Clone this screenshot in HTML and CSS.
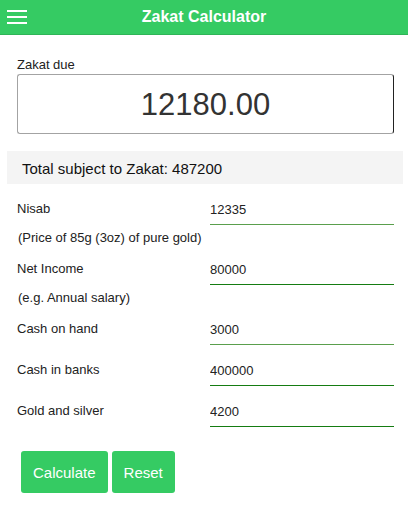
FILE: index.html
```
<!DOCTYPE html>
<html lang="en">
<head>
<meta charset="utf-8">
<title>Zakat Calculator</title>
<link rel="stylesheet" href="styles.css">
</head>
<body>
<header class="topbar">
  <div class="menu" aria-label="Menu">
    <svg width="20" height="14" viewBox="0 0 20 14"><rect x="0" y="0" width="20" height="2" fill="#fff"/><rect x="0" y="6" width="20" height="2" fill="#fff"/><rect x="0" y="12" width="20" height="2" fill="#fff"/></svg>
  </div>
  <h1 class="title">Zakat Calculator</h1>
  <div></div>
</header>
<main class="content">
  <section class="due">
    <div class="due-label">Zakat due</div>
    <div class="due-box">12180.00</div>
  </section>
  <div class="total">Total subject to Zakat: 487200</div>
  <form class="fields">
    <div class="row"><label class="label">Nisab</label><input class="field light" value="12335"></div>
    <div class="hint">(Price of 85g (3oz) of pure gold)</div>
    <div class="row"><label class="label">Net Income</label><input class="field dark" value="80000"></div>
    <div class="hint">(e.g. Annual salary)</div>
    <div class="row"><label class="label">Cash on hand</label><input class="field light" value="3000"></div>
    <div class="row"><label class="label">Cash in banks</label><input class="field dark" value="400000"></div>
    <div class="row"><label class="label">Gold and silver</label><input class="field dark" value="4200"></div>
  </form>
  <div class="actions">
    <button class="btn" type="button">Calculate</button>
    <button class="btn" type="button">Reset</button>
  </div>
</main>
</body>
</html>
```
FILE: styles.css
```
html, body {
  margin: 0;
  padding: 0;
  background: #fff;
  font-family: "Liberation Sans", Arial, sans-serif;
  color: #222;
}
.topbar {
  display: grid;
  grid-template-columns: 1fr auto 1fr;
  align-items: center;
  height: 34px;
  background: #35cb63;
  border-bottom: 1px solid #2fb457;
}
.menu {
  padding-left: 7px;
  display: flex;
  align-items: center;
  margin-top: -1px;
}
.menu svg { display: block; }
.title {
  margin: 0;
  font-size: 16px;
  font-weight: bold;
  line-height: 34px;
  color: #fff;
  text-align: center;
}
.content {
  padding: 0 5px 0 7px;
}
.due {
  padding: 22px 9px 0 10px;
}
.due-label {
  font-size: 13px;
  line-height: 16px;
  color: #222;
}
.due-box {
  margin-top: 1px;
  border: 1px solid #a3a3a3;
  border-right-color: #222;
  border-radius: 3px;
  font-size: 31px;
  line-height: 56px;
  padding-top: 2px;
  box-sizing: border-box;
  height: 60px;
  text-align: center;
  color: #333;
}
.total {
  margin-top: 17px;
  height: 33px;
  box-sizing: border-box;
  padding: 2px 0 0 15px;
  line-height: 31px;
  background: #f4f4f4;
  font-size: 15px;
  color: #111;
}
.fields {
  margin: 0;
  padding: 0 9px 0 10px;
}
.row {
  display: grid;
  grid-template-columns: 193px 184px;
  height: 41px;
}
.label {
  font-size: 13px;
  line-height: 16px;
  padding-top: 17px;
  color: #222;
}
.field {
  margin: 10px 0 0 0;
  height: 31px;
  box-sizing: border-box;
  width: 184px;
  padding: 0;
  border: none;
  border-bottom: 1px solid #137b13;
  font-family: "Liberation Sans", Arial, sans-serif;
  font-size: 13px;
  color: #222;
  background: transparent;
  outline: none;
}
.field.light { border-bottom-color: #5a9f4d; }
.field.dark { border-bottom-color: #157c12; }
.hint {
  height: 19px;
  box-sizing: border-box;
  padding: 5px 0 0 1px;
  font-size: 13px;
  line-height: 16px;
  color: #222;
}
.actions {
  display: flex;
  gap: 4px;
  margin-top: 24px;
  padding-left: 14px;
}
.btn {
  height: 42px;
  padding: 0 12px;
  border: none;
  border-radius: 3px;
  background: #35cb63;
  color: #fff;
  font-family: "Liberation Sans", Arial, sans-serif;
  font-size: 15px;
}
```
